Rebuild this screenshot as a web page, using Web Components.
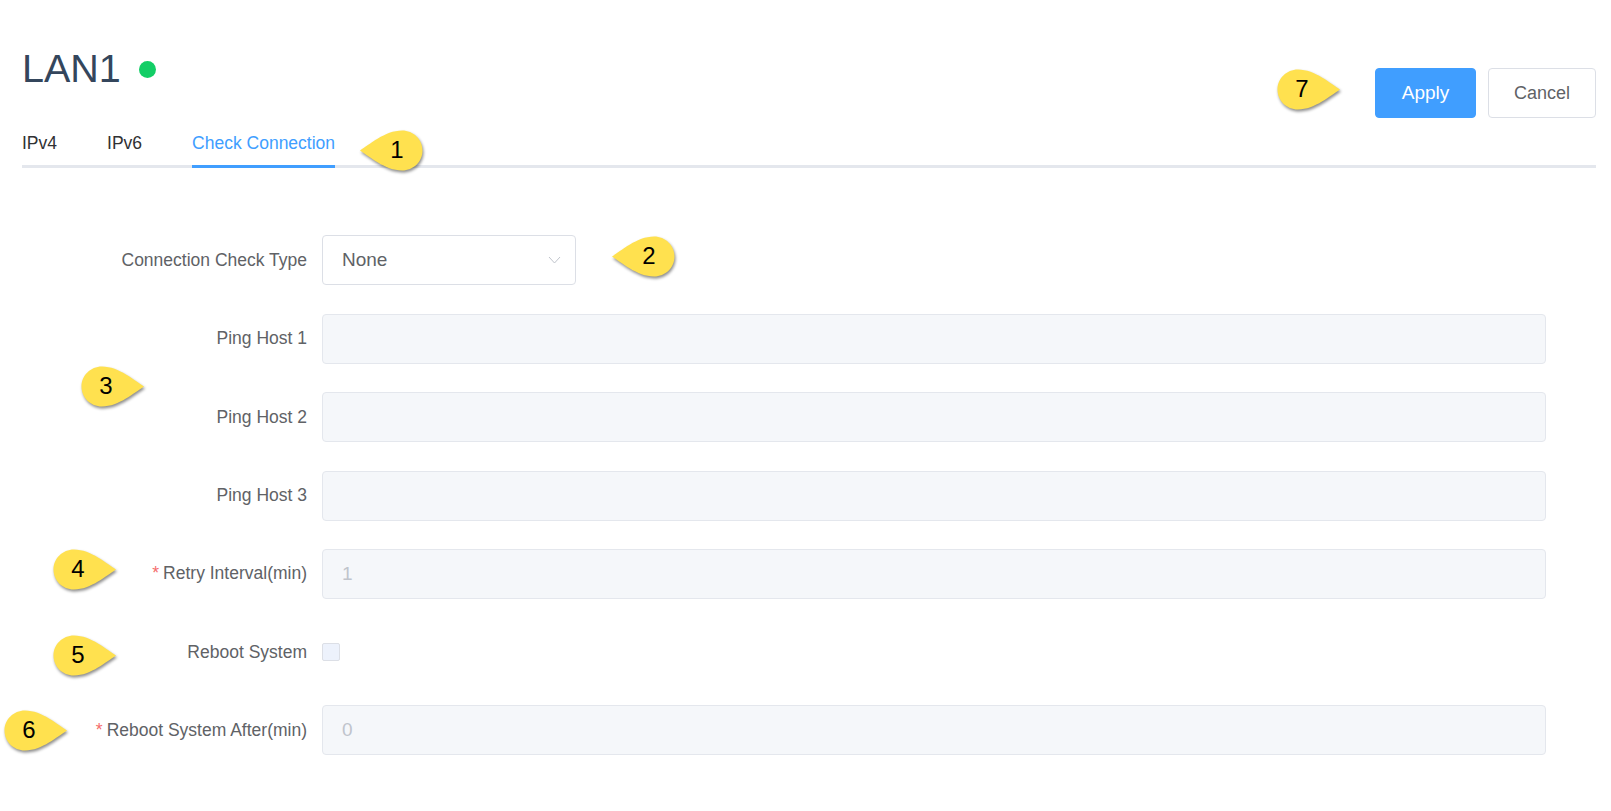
<!DOCTYPE html>
<html>
<head>
<meta charset="utf-8">
<title>LAN1</title>
<style>
  html, body { margin: 0; padding: 0; background: #fff; }
  body { font-family: "Liberation Sans", Arial, sans-serif; }
</style>
</head>
<body>
<lan-page>
  <page-header slot="header" title-text="LAN1"></page-header>
  <tab-bar slot="tabs">
    <tab-item>IPv4</tab-item>
    <tab-item>IPv6</tab-item>
    <tab-item active>Check Connection</tab-item>
  </tab-bar>
  <form-row label="Connection Check Type"><select-box>None</select-box></form-row>
  <form-row label="Ping Host 1"><text-box></text-box></form-row>
  <form-row label="Ping Host 2"><text-box></text-box></form-row>
  <form-row label="Ping Host 3"><text-box></text-box></form-row>
  <form-row label="Retry Interval(min)" required><text-box>1</text-box></form-row>
  <form-row label="Reboot System" style="height:49.5px"><check-box></check-box></form-row>
  <form-row label="Reboot System After(min)" required><text-box>0</text-box></form-row>

  <call-out slot="callouts" tip="left" style="left:360px;top:130px">1</call-out>
  <call-out slot="callouts" tip="left" style="left:612px;top:236px">2</call-out>
  <call-out slot="callouts" style="left:81px;top:366px">3</call-out>
  <call-out slot="callouts" style="left:53px;top:549px">4</call-out>
  <call-out slot="callouts" style="left:53px;top:635px">5</call-out>
  <call-out slot="callouts" style="left:4px;top:710px">6</call-out>
  <call-out slot="callouts" style="left:1277px;top:69px">7</call-out>
</lan-page>

<script>
class LanPage extends HTMLElement {
  constructor() {
    super();
    this.attachShadow({ mode: 'open' }).innerHTML = `
      <style>
        :host { display: block; position: relative; height: 811px; overflow: hidden; }
        .top { padding: 0 15px 0 22px; }
        .form { padding: 67.4px 65px 0 0; margin: 0 0 0 22px; display: flex; flex-direction: column; gap: 28.4px; }
      </style>
      <div class="top">
        <slot name="header"></slot>
        <slot name="tabs"></slot>
      </div>
      <div class="form"><slot></slot></div>
      <slot name="callouts"></slot>
    `;
  }
}

class PageHeader extends HTMLElement {
  constructor() {
    super();
    this.attachShadow({ mode: 'open' }).innerHTML = `
      <style>
        :host { display: flex; justify-content: space-between; height: 130px; box-sizing: border-box; }
        .title { display: flex; align-items: center; gap: 18px; height: 44px; margin-top: 46px;
                 font-size: 39.5px; color: #34465c; }
        .dot { width: 17px; height: 17px; border-radius: 50%; background: #13ce66; margin-top: 3px; }
        .actions { display: flex; gap: 12px; margin-top: 68px; height: 50px; }
        button { font: inherit; border-radius: 4px; height: 50px; padding: 0; cursor: pointer; }
        .apply { width: 101px; font-size: 19px; color: #fff; background: #409eff; border: 1px solid #409eff; }
        .cancel { width: 108px; font-size: 18px; color: #606266; background: #fff; border: 1px solid #dcdfe6; }
      </style>
      <div class="title"><span class="name"></span><span class="dot"></span></div>
      <div class="actions">
        <button class="apply">Apply</button>
        <button class="cancel">Cancel</button>
      </div>
    `;
    this.shadowRoot.querySelector('.name').textContent = this.getAttribute('title-text');
  }
}

class TabBar extends HTMLElement {
  constructor() {
    super();
    this.attachShadow({ mode: 'open' }).innerHTML = `
      <style>
        :host { display: flex; gap: 50px; height: 35px; border-bottom: 3px solid #e4e7ed; }
      </style>
      <slot></slot>
    `;
  }
}

class TabItem extends HTMLElement {
  constructor() {
    super();
    this.attachShadow({ mode: 'open' }).innerHTML = `
      <style>
        :host { display: block; height: 38px; box-sizing: border-box; line-height: 27px; font-size: 17.5px; color: #303133; }
        :host([active]) { color: #409eff; border-bottom: 3px solid #409eff; }
      </style>
      <slot></slot>
    `;
  }
}

class FormRow extends HTMLElement {
  constructor() {
    super();
    this.attachShadow({ mode: 'open' }).innerHTML = `
      <style>
        :host { display: flex; align-items: center; height: 50px; }
        .label { width: 285px; margin-right: 15px; text-align: right; font-size: 17.5px; color: #606266; white-space: nowrap; }
        .star { color: #f56c6c; margin-right: 4px; }
        .field { flex: 1; min-width: 0; display: flex; }
      </style>
      <div class="label"></div>
      <div class="field"><slot></slot></div>
    `;
    const label = this.shadowRoot.querySelector('.label');
    if (this.hasAttribute('required')) {
      const star = document.createElement('span');
      star.className = 'star';
      star.textContent = '*';
      label.appendChild(star);
    }
    label.appendChild(document.createTextNode(this.getAttribute('label')));
  }
}

class TextBox extends HTMLElement {
  constructor() {
    super();
    this.attachShadow({ mode: 'open' }).innerHTML = `
      <style>
        :host { display: flex; align-items: center; flex: 1; height: 50px; box-sizing: border-box; padding: 0 19px;
                background: #f5f7fa; border: 1px solid #e4e7ed; border-radius: 4px;
                color: #c0c4cc; font-size: 19px; }
      </style>
      <slot></slot>
    `;
  }
}

class SelectBox extends HTMLElement {
  constructor() {
    super();
    this.attachShadow({ mode: 'open' }).innerHTML = `
      <style>
        :host { display: flex; align-items: center; justify-content: space-between; width: 254px; height: 50px;
                box-sizing: border-box; padding: 0 14px 0 19px; background: #fff; border: 1px solid #dcdfe6;
                border-radius: 4px; color: #606266; font-size: 19px; }
        svg { width: 13px; height: 8px; }
      </style>
      <slot></slot>
      <svg viewBox="0 0 13 8"><path d="M1 1l5.5 6L12 1" fill="none" stroke="#c0c4cc" stroke-width="1"/></svg>
    `;
  }
}

class CheckBox extends HTMLElement {
  constructor() {
    super();
    this.attachShadow({ mode: 'open' }).innerHTML = `
      <style>
        :host { display: block; width: 18px; height: 18px; box-sizing: border-box; background: #edf2fc;
                border: 1px solid #dcdfe6; border-radius: 2px; }
      </style>
    `;
  }
}

class CallOut extends HTMLElement {
  constructor() {
    super();
    const left = this.getAttribute('tip') === 'left';
    this.attachShadow({ mode: 'open' }).innerHTML = `
      <style>
        :host { position: absolute; display: flex; align-items: center; width: 63px; height: 42px;
                font-size: 24px; color: #000; }
        svg { position: absolute; inset: 0; overflow: visible; filter: drop-shadow(1px 2px 1.5px rgba(0,0,0,.45)); }
        .num { position: relative; width: 42px; text-align: center; margin: -3px 0 0 4px; }
        :host([tip="left"]) .num { margin-left: 16px; }
      </style>
      <svg width="63" height="42" viewBox="0 0 63 42">
        <path transform="${left ? 'translate(63 0) scale(-1 1)' : ''}"
          d="M63 20.5 C54 15 38 .5 21 .5 C9.5 .5 .5 9.5 .5 20.5 C.5 31.5 9.5 40.5 21 40.5 C38 40.5 54 26 63 20.5Z"
          fill="#ffe14f"/>
      </svg>
      <div class="num"><slot></slot></div>
    `;
  }
}

customElements.define('lan-page', LanPage);
customElements.define('page-header', PageHeader);
customElements.define('tab-bar', TabBar);
customElements.define('tab-item', TabItem);
customElements.define('form-row', FormRow);
customElements.define('text-box', TextBox);
customElements.define('select-box', SelectBox);
customElements.define('check-box', CheckBox);
customElements.define('call-out', CallOut);
</script>
</body>
</html>
